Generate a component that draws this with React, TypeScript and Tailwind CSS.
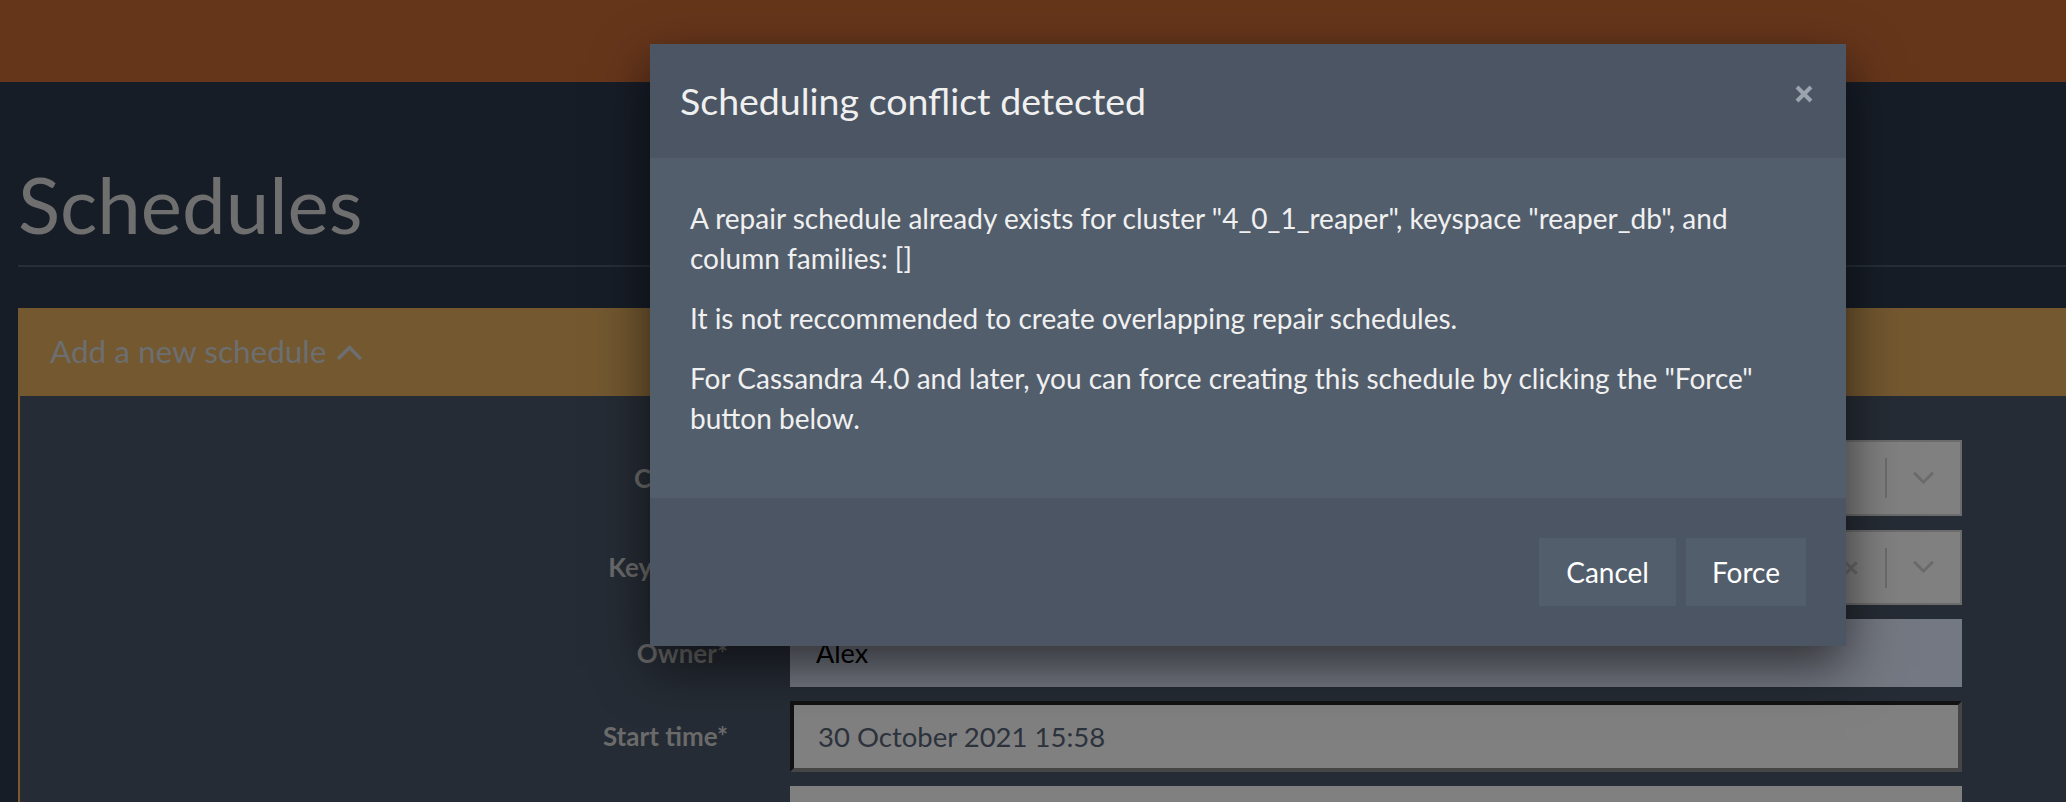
import React from "react";

const font = "font-['Lato','Noto_Sans',sans-serif]";

function Chevron({ up = false, className = "" }: { up?: boolean; className?: string }) {
  return (
    <svg viewBox="0 0 24 14" className={className} fill="none" stroke="currentColor" strokeWidth={3.2} strokeLinecap="square">
      {up ? <path d="M3 12 L12 3 L21 12" /> : <path d="M3 2 L12 11 L21 2" />}
    </svg>
  );
}

function Cross({ className = "", width = 3.5 }: { className?: string; width?: number }) {
  return (
    <svg viewBox="0 0 20 20" className={className} fill="none" stroke="currentColor" strokeWidth={width}>
      <path d="M3 3 L17 17 M17 3 L3 17" />
    </svg>
  );
}

function Row({ label, children, h }: { label: string; children: React.ReactNode; h: string }) {
  return (
    <div className={`flex items-center ${h}`}>
      <div className="w-[708px] shrink-0 text-right text-[26px] font-bold text-[#6b6b6b]">{label}</div>
      <div className="ml-[62px] flex-1 h-full">{children}</div>
    </div>
  );
}

function Select({ value, clearable = false }: { value: string; clearable?: boolean }) {
  return (
    <div className="flex h-full items-center border-2 border-[#6b6b6b] bg-[#808080]">
      <div className="flex-1 pl-[24px] text-[27px] text-[#2d333d]">{value}</div>
      {clearable && <Cross className="mr-[26px] h-[16px] w-[16px] text-[#6b6b6b]" width={4} />}
      <div className="h-[40px] w-[2px] bg-[#6b6b6b]" />
      <div className="flex w-[73px] justify-center">
        <Chevron className="h-[13px] w-[23px] text-[#6b6b6b]" />
      </div>
    </div>
  );
}

export default function App() {
  return (
    <div className={`relative h-[802px] w-[2066px] overflow-hidden bg-[#171d27] ${font}`}>
      <div className="h-[82px] bg-[#66361b]" />

      <div className="pl-[18px]">
        <div className="border-b-2 border-[#272e38] pt-[83px] pb-[22px]">
          <h1 className="text-[78px] leading-[78px] text-[#6f6f6f]">Schedules</h1>
        </div>

        <div className="mt-[41px]">
          <div className="flex h-[88px] items-center bg-[#735830] pl-[32px]">
            <span className="text-[31.5px] text-[#6d6e70]">Add a new schedule</span>
            <Chevron up className="ml-[10px] h-[16px] w-[27px] text-[#6d6e70]" />
          </div>
          <div className="flex flex-col gap-[14px] border-l-2 border-[#7b5b2a] bg-[#262c35] pt-[44px] pr-[104px] pb-[40px]">
            <Row label="Cluster*" h="h-[76px]">
              <Select value="4_0_1_reaper" />
            </Row>
            <Row label="Keyspace*" h="h-[75px]">
              <Select value="reaper_db" clearable />
            </Row>
            <Row label="Owner*" h="h-[68px]">
              <div className="flex h-full items-center bg-[#747882] pl-[26px] text-[27px] text-black">Alex</div>
            </Row>
            <Row label="Start time*" h="h-[71px]">
              <div className="flex h-full items-center border-4 border-t-[#121212] border-l-[#121212] border-b-[#454545] border-r-[#454545] bg-[#808080] pl-[24px] text-[27.5px] text-[#2d333d]">
                30 October 2021 15:58
              </div>
            </Row>
            <Row label="" h="h-[70px]">
              <div className="h-full bg-[#808080]" />
            </Row>
          </div>
        </div>
      </div>

      {/* modal */}
      <div className="absolute left-[650px] top-[44px] w-[1196px] shadow-[0_20px_50px_rgba(0,0,0,0.6)]">
        <div className="flex h-[114px] items-center justify-between bg-[#4b5563] pl-[30px] pr-[32px]">
          <h2 className="text-[37.5px] text-[#f0f0f0]">Scheduling conflict detected</h2>
          <Cross className="mb-[14px] h-[20px] w-[20px] text-[#9ba3ae]" width={4} />
        </div>
        <div className="bg-[#525e6c] px-[40px] pt-[40px] pb-[40px] text-[28px] leading-[40px] text-[#f0f0f0]">
          <p className="mb-[20px]">
            A repair schedule already exists for cluster "4_0_1_reaper", keyspace "reaper_db", and column families: []
          </p>
          <p className="mb-[20px]">It is not reccommended to create overlapping repair schedules.</p>
          <p className="mb-[20px]">
            For Cassandra 4.0 and later, you can force creating this schedule by clicking the "Force" button below.
          </p>
        </div>
        <div className="flex justify-end gap-[10px] bg-[#4b5563] py-[40px] pr-[40px]">
          <button className="h-[68px] bg-[#525e6c] px-[27px] text-[28px] text-white">Cancel</button>
          <button className="h-[68px] bg-[#525e6c] px-[26px] text-[28px] text-white">Force</button>
        </div>
      </div>
    </div>
  );
}
